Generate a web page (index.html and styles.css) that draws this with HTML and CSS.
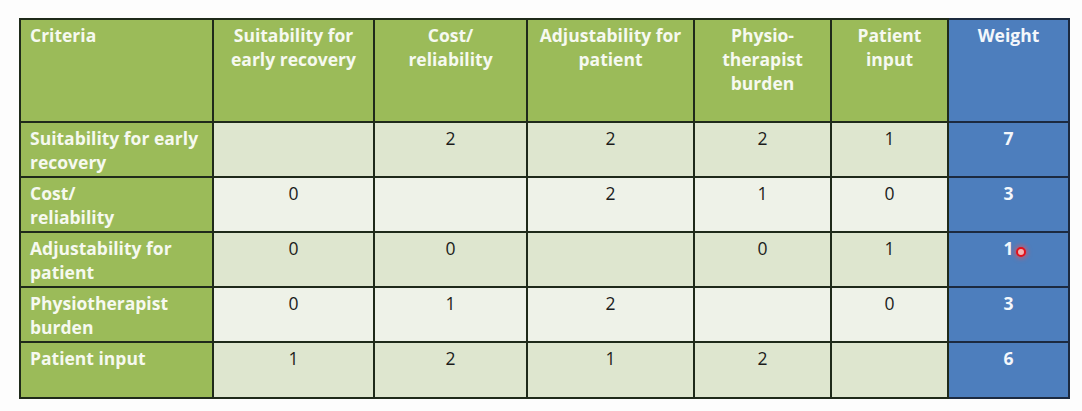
FILE: index.html
```html
<!DOCTYPE html>
<html lang="en">
<head>
<meta charset="utf-8">
<title>Criteria weighting</title>
<link rel="stylesheet" href="styles.css">
</head>
<body>
<div class="page">
  <div class="wrap">
    <table class="matrix">
      <colgroup>
        <col class="c1"><col class="c2"><col class="c3"><col class="c4"><col class="c5"><col class="c6"><col class="c7">
      </colgroup>
      <thead>
        <tr>
          <th class="rowhead">Criteria</th>
          <th>Suitability for early recovery</th>
          <th>Cost/<br>reliability</th>
          <th>Adjustability for patient</th>
          <th>Physio-<br>therapist<br>burden</th>
          <th>Patient<br>input</th>
          <th class="weight">Weight</th>
        </tr>
      </thead>
      <tbody>
        <tr class="odd">
          <th class="rowhead">Suitability for early recovery</th>
          <td></td><td>2</td><td>2</td><td>2</td><td>1</td>
          <td class="weight">7</td>
        </tr>
        <tr class="even">
          <th class="rowhead">Cost/<br>reliability</th>
          <td>0</td><td></td><td>2</td><td>1</td><td>0</td>
          <td class="weight">3</td>
        </tr>
        <tr class="odd">
          <th class="rowhead">Adjustability for patient</th>
          <td>0</td><td>0</td><td></td><td>0</td><td>1</td>
          <td class="weight"><span class="cursor-host">1<span class="cursor"></span></span></td>
        </tr>
        <tr class="even">
          <th class="rowhead">Physiotherapist burden</th>
          <td>0</td><td>1</td><td>2</td><td></td><td>0</td>
          <td class="weight">3</td>
        </tr>
        <tr class="odd last">
          <th class="rowhead">Patient input</th>
          <td>1</td><td>2</td><td>1</td><td>2</td><td></td>
          <td class="weight">6</td>
        </tr>
      </tbody>
    </table>
  </div>
</div>
</body>
</html>
```

FILE: styles.css
```css
html, body {
  margin: 0;
  padding: 0;
  background: #ffffff;
}

.page {
  width: 1082px;
  height: 411px;
  background: #fdfdfd;
  font-family: "Open Sans", "Lato", "DejaVu Sans", sans-serif;
}

.wrap {
  padding: 18px 0 0 19px;
}

.matrix {
  border-collapse: collapse;
  table-layout: fixed;
  width: 1049px;
}

.c1 { width: 193px; }
.c2 { width: 161px; }
.c3 { width: 153px; }
.c4 { width: 167px; }
.c5 { width: 137px; }
.c6 { width: 117px; }
.c7 { width: 121px; }

.matrix th,
.matrix td {
  border: 2px solid #1f2a1a;
  vertical-align: top;
  padding: 3px 5px 0 5px;
  font-size: 17.5px;
  line-height: 24px;
  text-align: center;
}

.matrix thead tr {
  height: 103px;
}

.matrix tbody tr {
  height: 55px;
}

.matrix tbody tr.last {
  height: 56px;
}

.matrix th {
  background: #9bbb59;
  color: #f6f9f0;
  font-weight: 700;
}

.matrix th.rowhead {
  text-align: left;
  padding-left: 9px;
  padding-right: 2px;
}

.matrix td {
  color: #1c1c1c;
  font-weight: 400;
}

.matrix tr.odd td {
  background: #dee6cf;
}

.matrix tr.even td {
  background: #eef2e8;
}

.matrix .weight,
.matrix tr.odd td.weight,
.matrix tr.even td.weight {
  background: #4d7ebd;
  color: #f4f7fb;
  font-weight: 700;
  border-color: #1c2a40;
}

.cursor-host {
  position: relative;
}

.cursor {
  position: absolute;
  left: 13px;
  top: 11px;
  width: 6px;
  height: 6px;
  border: 2px solid #e3101a;
  border-radius: 50%;
  background: #f4b3b0;
  box-shadow: 0 0 4px 2px rgba(240, 80, 80, 0.55);
}
```
